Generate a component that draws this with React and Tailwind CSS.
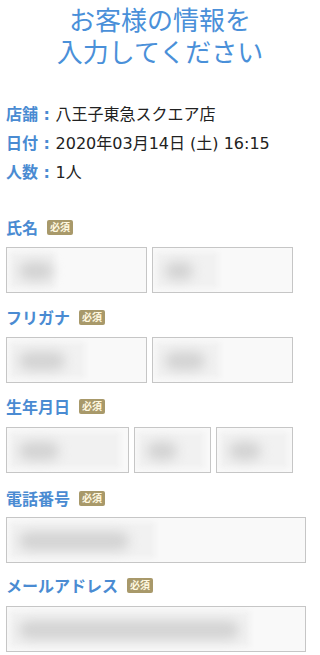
const font = { fontFamily: '"Noto Sans CJK JP", sans-serif' };
const infoFont = { fontFamily: '"DejaVu Sans", "Noto Sans CJK JP", sans-serif' };

function Badge() {
  return (
    <span className="ml-[9px] inline-flex h-[15px] items-center rounded-[2px] bg-[#a8996a] px-[3px] text-[10px] font-bold leading-none text-[#fff8e0]">
      必須
    </span>
  );
}

function FieldLabel({ children }) {
  return (
    <div className="flex h-[20px] items-center">
      <span className="text-[16px] font-bold text-[#4a8bd2]">{children}</span>
      <Badge />
    </div>
  );
}

function Field({ width, blob, light }) {
  return (
    <div
      className="relative h-[46px] overflow-hidden border border-[#c6c6c6] bg-[#f9f9f9]"
      style={{ width }}
    >
      {light && (
        <div
          className="absolute top-[4px] left-[3px] h-[36px] bg-[#f1f1f1] blur-[2px]"
          style={{ width: light }}
        />
      )}
      <div
        className="absolute top-[14px] left-[12px] h-[18px] rounded-full bg-[#d2d2d2] blur-[6px]"
        style={{ width: blob }}
      />
    </div>
  );
}

export default function App() {
  return (
    <div className="w-[320px] bg-white px-[6px] pb-4 text-[#222]" style={font}>
      <h1 className="pt-[3px] text-center text-[26px] font-normal leading-[32px] text-[#4a90d9]">
        <div>お客様の情報を</div>
        <div>入力してください</div>
      </h1>

      <div className="mt-[38px] space-y-[10px] text-[16px] leading-[19px]" style={infoFont}>
        <div>
          <span className="font-bold text-[#4a8bd2]">店舗 : </span>八王子東急スクエア店
        </div>
        <div>
          <span className="font-bold text-[#4a8bd2]">日付 : </span>2020年03月14日 (土) 16:15
        </div>
        <div>
          <span className="font-bold text-[#4a8bd2]">人数 : </span>1人
        </div>
      </div>

      <div className="mt-[35px] flex flex-col">
        <FieldLabel>氏名</FieldLabel>
        <div className="mt-[10px] flex gap-[5px]">
          <Field width="141px" blob="34px" light="45px" />
          <Field width="141px" blob="28px" light="62px" />
        </div>

        <div className="mt-[14px]">
          <FieldLabel>フリガナ</FieldLabel>
        </div>
        <div className="mt-[10px] flex gap-[5px]">
          <Field width="141px" blob="46px" light="75px" />
          <Field width="141px" blob="40px" light="64px" />
        </div>

        <div className="mt-[13px]">
          <FieldLabel>生年月日</FieldLabel>
        </div>
        <div className="mt-[11px] flex gap-[5px]">
          <Field width="123px" blob="40px" light="110px" />
          <Field width="77px" blob="30px" light="66px" />
          <Field width="77px" blob="32px" light="68px" />
        </div>

        <div className="mt-[15px]">
          <FieldLabel>電話番号</FieldLabel>
        </div>
        <div className="mt-[9px]">
          <Field width="300px" blob="110px" light="145px" />
        </div>

        <div className="mt-[12px]">
          <FieldLabel>メールアドレス</FieldLabel>
        </div>
        <div className="mt-[11px]">
          <Field width="300px" blob="220px" light="240px" />
        </div>
      </div>
    </div>
  );
}
